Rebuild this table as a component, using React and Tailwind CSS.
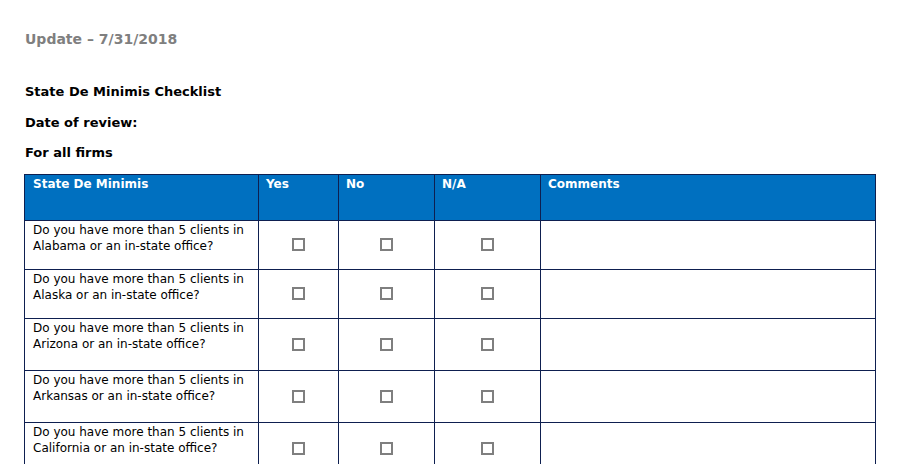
import React from "react";

const states = ["Alabama", "Alaska", "Arizona", "Arkansas", "California"];
const heights = ["h-[49px]", "h-[49px]", "h-[52px]", "h-[52px]", "h-[52px]"];

function Box() {
  return (
    <span className="inline-block w-[13px] h-[13px] border-2 border-[#7f7f7f] align-middle relative top-[-1px]"></span>
  );
}

export default function App() {
  return (
    <div className="w-[906px] h-[464px] overflow-hidden bg-white text-[12px] leading-[16px] text-black" style={{ fontFamily: '"DejaVu Sans", Verdana, sans-serif' }}>
      <div className="pl-[25px] pt-[31px]">
        <div className="font-bold text-[14px] text-[#7f7f7f]">Update – 7/31/2018</div>
        <div className="font-bold text-[13px] mt-[37px]">State De Minimis Checklist</div>
        <div className="font-bold text-[13px] mt-[15px]">Date of review:</div>
        <div className="font-bold text-[13px] mt-[14px]">For all firms</div>
      </div>
      <table className="ml-[24px] mt-[13px] border-collapse table-fixed w-[852px]">
        <colgroup>
          <col className="w-[234px]" />
          <col className="w-[80px]" />
          <col className="w-[96px]" />
          <col className="w-[106px]" />
          <col />
        </colgroup>
        <thead>
          <tr className="h-[46px] bg-[#0070c0] text-white font-bold align-top">
            <th className="border border-[#0e1f50] text-left pl-[8px] pt-[1px] font-bold">State De Minimis</th>
            <th className="border border-[#0e1f50] text-left pl-[7px] pt-[1px] font-bold">Yes</th>
            <th className="border border-[#0e1f50] text-left pl-[7px] pt-[1px] font-bold">No</th>
            <th className="border border-[#0e1f50] text-left pl-[7px] pt-[1px] font-bold">N/A</th>
            <th className="border border-[#0e1f50] text-left pl-[7px] pt-[1px] font-bold">Comments</th>
          </tr>
        </thead>
        <tbody>
          {states.map((s, i) => (
            <tr key={s} className={heights[i] + " align-top"}>
              <td className="border border-[#0e1f50] pl-[8px] pt-[1px]">
                Do you have more than 5 clients in {s} or an in-state office?
              </td>
              <td className="border border-[#0e1f50] text-center align-middle"><Box /></td>
              <td className="border border-[#0e1f50] text-center align-middle"><Box /></td>
              <td className="border border-[#0e1f50] text-center align-middle"><Box /></td>
              <td className="border border-[#0e1f50]"></td>
            </tr>
          ))}
        </tbody>
      </table>
    </div>
  );
}
